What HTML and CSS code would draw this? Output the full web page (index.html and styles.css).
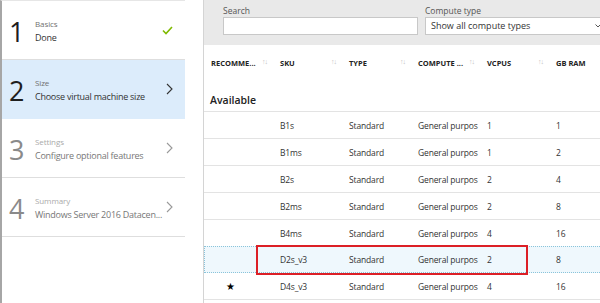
FILE: index.html
```html
<!DOCTYPE html>
<html>
<head>
    <title>Create virtual machine - Size</title>
    <link rel="stylesheet" href="styles.css">
</head>
<body>
    <div class="page">
        <ul class="steps">
            <li class="step done">
                <span class="num">1</span>
                <div class="info">
                    <div class="title">Basics</div>
                    <div class="sub">Done</div>
                </div>
                <svg class="mark" width="11" height="9" viewBox="0 0 11 9"><path d="M1 4.5 L4 7.5 L10 1" fill="none" stroke="#7fba00" stroke-width="1.6"/></svg>
            </li>
            <li class="step active">
                <span class="num">2</span>
                <div class="info">
                    <div class="title">Size</div>
                    <div class="sub">Choose virtual machine size</div>
                </div>
                <svg class="mark" width="7" height="12" viewBox="0 0 7 12"><path d="M1 1 L6 6 L1 11" fill="none" stroke="#333" stroke-width="1.1"/></svg>
            </li>
            <li class="step off">
                <span class="num">3</span>
                <div class="info">
                    <div class="title">Settings</div>
                    <div class="sub">Configure optional features</div>
                </div>
                <svg class="mark" width="7" height="12" viewBox="0 0 7 12"><path d="M1 1 L6 6 L1 11" fill="none" stroke="#999" stroke-width="1.1"/></svg>
            </li>
            <li class="step off">
                <span class="num">4</span>
                <div class="info">
                    <div class="title">Summary</div>
                    <div class="sub">Windows Server 2016 Datacen...</div>
                </div>
                <svg class="mark" width="7" height="12" viewBox="0 0 7 12"><path d="M1 1 L6 6 L1 11" fill="none" stroke="#999" stroke-width="1.1"/></svg>
            </li>
        </ul>

        <div class="blade">
            <div class="filters">
                <div class="field">
                    <label>Search</label>
                    <div class="box"></div>
                </div>
                <div class="field wide">
                    <label>Compute type</label>
                    <div class="box">Show all compute types<svg class="caret" width="6" height="4" viewBox="0 0 6 4"><path d="M0.5 0.5 L3 3 L5.5 0.5" fill="none" stroke="#555" stroke-width="1"/></svg></div>
                </div>
            </div>

            <div class="grid">
                <div class="row head">
                    <div class="cell">RECOMME...<span class="sort">&#8593;&#8595;</span></div>
                    <div class="cell">SKU<span class="sort">&#8593;&#8595;</span></div>
                    <div class="cell">TYPE<span class="sort">&#8593;&#8595;</span></div>
                    <div class="cell">COMPUTE ...<span class="sort">&#8593;&#8595;</span></div>
                    <div class="cell">VCPUS<span class="sort">&#8593;&#8595;</span></div>
                    <div class="cell">GB RAM</div>
                </div>
                <div class="group">Available</div>
                <div class="row"><div class="cell"></div><div class="cell">B1s</div><div class="cell">Standard</div><div class="cell">General purpos</div><div class="cell">1</div><div class="cell">1</div></div>
                <div class="row"><div class="cell"></div><div class="cell">B1ms</div><div class="cell">Standard</div><div class="cell">General purpos</div><div class="cell">1</div><div class="cell">2</div></div>
                <div class="row"><div class="cell"></div><div class="cell">B2s</div><div class="cell">Standard</div><div class="cell">General purpos</div><div class="cell">2</div><div class="cell">4</div></div>
                <div class="row"><div class="cell"></div><div class="cell">B2ms</div><div class="cell">Standard</div><div class="cell">General purpos</div><div class="cell">2</div><div class="cell">8</div></div>
                <div class="row"><div class="cell"></div><div class="cell">B4ms</div><div class="cell">Standard</div><div class="cell">General purpos</div><div class="cell">4</div><div class="cell">16</div></div>
                <div class="row selected"><div class="cell"></div><div class="cell">D2s_v3</div><div class="cell">Standard</div><div class="cell">General purpos</div><div class="cell">2</div><div class="cell">8</div>
                    <div class="highlight"></div>
                </div>
                <div class="row"><div class="cell star">&#9733;</div><div class="cell">D4s_v3</div><div class="cell">Standard</div><div class="cell">General purpos</div><div class="cell">4</div><div class="cell">16</div></div>
            </div>
        </div>
    </div>
</body>
</html>
```

FILE: styles.css
```css
html, body { margin: 0; padding: 0; background: #fff; overflow: hidden; }
body { font-family: "Open Sans", "Noto Sans", sans-serif; color: #333; }
.page { display: flex; height: 303px; }

.steps { list-style: none; margin: 0; padding: 0; width: 183px; flex: none; border-left: 2px solid #a6a6a6; border-top: 1px solid #e6e6e6; margin-right: 18px; }
.step { display: flex; align-items: center; height: 58px; border-bottom: 1px solid #dedede; padding: 0 0 0 7px; }
.step.active { background: #dcecfb; border-bottom-color: #dcecfb; }
.step .num { flex: none; width: 26px; font-size: 27px; line-height: 1; color: #1e1e1e; margin-top: 2px; }
.step .info { flex: 1; padding-top: 1px; min-width: 0; }
.step .title { font-size: 8px; color: #707070; line-height: 15px; letter-spacing: -0.1px; }
.step .sub { font-size: 9px; color: #333; line-height: 14px; white-space: nowrap; letter-spacing: -0.25px; }
.step .mark { flex: none; margin-right: 12px; }
.step.off .num { color: #8a8a8a; }
.step.off .title { color: #aaa; }
.step.off .sub { color: #777; }

.blade { flex: 1; min-width: 0; border-left: 1px solid #d4d4d4; }
.filters { display: flex; gap: 7px; height: 45px; box-sizing: border-box; background: #e9e9e9; padding: 4px 0 0 19px; }
.field label { display: block; font-size: 8.5px; color: #555; line-height: 13px; }
.field .box { width: 188px; height: 16px; background: #fff; border: 1px solid #c8c8c8; font-size: 9px; line-height: 16px; padding-left: 5px; color: #333; position: relative; }
.field.wide .box { width: 172px; border-right: none; }
.caret { position: absolute; right: 2px; top: 6px; }

.grid { font-size: 8.5px; }
.row { display: flex; height: 26px; align-items: center; border-bottom: 1px solid #e3e3e3; position: relative; }
.cell { width: 62px; padding-left: 7px; flex: none; white-space: nowrap; letter-spacing: -0.15px; }
.row.head { height: 33px; border-bottom: none; font-weight: 700; font-size: 7.5px; color: #222; padding-top: 1px; }
.row.head .cell { position: relative; letter-spacing: 0; }
.sort { position: absolute; right: 6px; top: -1px; font-size: 7px; color: #c2c2c2; font-weight: 400; letter-spacing: -1px; }
.group { height: 33px; box-sizing: border-box; padding: 14px 0 0 6px; font-size: 10.5px; font-weight: 600; color: #222; border-bottom: 1px solid #e3e3e3; }
.row.selected { background: #eff8fd; border-top: 1px dotted #8ac4da; border-bottom: 1px dotted #8ac4da; border-left: 1px dotted #8ac4da; height: 27px; margin-top: -1px; box-sizing: border-box; }
.row.selected .cell:first-child { width: 61px; }
.cell.star { padding-left: 22px; width: 47px; font-size: 10px; color: #000; }
.highlight { position: absolute; left: 51px; top: -2px; width: 268px; height: 26px; border: 2.5px solid #dc1f26; }
```
